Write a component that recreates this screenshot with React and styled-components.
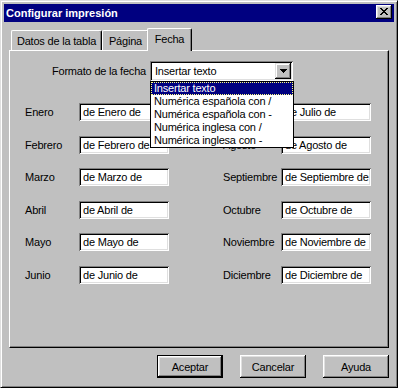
import React from "react";
import styled, { createGlobalStyle } from "styled-components";

const GlobalStyle = createGlobalStyle`
  html, body { margin: 0; padding: 0; background: #c0c0c0; }
  body {
    font-family: "Liberation Sans", Arial, sans-serif;
    font-size: 11px;
    letter-spacing: -0.2px;
    color: #000;
  }
  * { box-sizing: border-box; }
`;

const Window = styled.div`
  width: 398px;
  height: 388px;
  background: #c0c0c0;
  border: 1px solid;
  border-color: #dfdfdf #000 #000 #dfdfdf;
  box-shadow: inset 1px 1px #fff, inset -1px -1px #808080;
  padding: 3px;
  display: flex;
  flex-direction: column;
`;

const TitleBar = styled.div`
  height: 18px;
  background: #000080;
  color: #fff;
  display: flex;
  justify-content: space-between;
  align-items: flex-start;
  padding: 0 2px;
`;

const TitleText = styled.span`
  font-weight: bold;
  line-height: 18px;
  letter-spacing: 0;
`;

const CloseButton = styled.div`
  width: 16px;
  height: 14px;
  margin-top: 1px;
  background: #c0c0c0;
  box-shadow: inset -1px -1px #000, inset 1px 1px #fff, inset -2px -2px #808080,
    inset 2px 2px #dfdfdf;
  display: flex;
  align-items: center;
  justify-content: center;
  padding-right: 1px;
  padding-bottom: 1px;
`;

const Body = styled.div`
  padding: 6px 5px 0 5px;
  display: flex;
  flex-direction: column;
`;

const TabStrip = styled.div`
  position: relative;
  z-index: 2;
  height: 22px;
  display: flex;
  align-items: flex-end;
  padding-left: 2px;
`;

const Tab = styled.div`
  position: relative;
  z-index: ${(p) => (p.$active ? 1 : 0)};
  width: ${(p) => p.$width}px;
  height: ${(p) => (p.$active ? 23 : 20)}px;
  margin: ${(p) => (p.$active ? "0 -2px -1px -2px" : "0")};
  padding-bottom: ${(p) => (p.$active ? 3 : 0)}px;
  background: #c0c0c0;
  border-top: 1px solid #fff;
  border-left: 1px solid #fff;
  border-right: 1px solid #000;
  border-radius: 2px 2px 0 0;
  box-shadow: inset -1px 0 #808080;
  display: flex;
  align-items: center;
  justify-content: center;
  white-space: nowrap;
`;

const Panel = styled.div`
  position: relative;
  z-index: 1;
  height: 298px;
  border: 1px solid;
  border-color: #fff #000 #000 #fff;
  box-shadow: inset -1px -1px #808080;
  padding: 10px 0 0 15px;
`;

const FormatRow = styled.div`
  display: flex;
  align-items: center;
  padding-left: 21px;
`;

const FormatLabel = styled.span`
  width: 100px;
  text-align: right;
  margin-right: 4px;
`;

const SelectWrap = styled.div`
  position: relative;
  width: 143px;
  height: 20px;
`;

const sunken = `
  background: #fff;
  box-shadow: inset 1px 1px #808080, inset -1px -1px #fff, inset 2px 2px #000,
    inset -2px -2px #dfdfdf;
`;

const SelectField = styled.div`
  ${sunken}
  height: 100%;
  display: flex;
  align-items: center;
  padding: 2px 2px 2px 5px;
`;

const SelectValue = styled.span`
  flex: 1;
`;

const ArrowButton = styled.div`
  width: 16px;
  height: 16px;
  background: #c0c0c0;
  box-shadow: inset -1px -1px #000, inset 1px 1px #dfdfdf, inset -2px -2px #808080,
    inset 2px 2px #fff;
  display: flex;
  align-items: center;
  justify-content: center;
`;

const DropList = styled.div`
  position: absolute;
  top: 100%;
  left: 0;
  width: 144px;
  background: #fff;
  border: 1px solid #000;
  z-index: 5;
`;

const ListItem = styled.div`
  height: 13px;
  line-height: 13px;
  padding-left: 3px;
  white-space: nowrap;
  background: ${(p) => (p.$active ? "#000080" : "transparent")};
  color: ${(p) => (p.$active ? "#fff" : "#000")};
  outline: ${(p) => (p.$active ? "1px dotted #ffff80" : "none")};
  outline-offset: -1px;
`;

const MonthColumns = styled.div`
  display: flex;
  gap: 54px;
  margin-top: 22px;
`;

const MonthColumn = styled.div`
  display: grid;
  grid-template-columns: ${(p) => p.$labelWidth}px 90px;
  row-gap: 14.6px;
  align-items: center;
`;

const MonthLabel = styled.span`
  white-space: nowrap;
`;

const MonthInput = styled.div`
  ${sunken}
  height: 18px;
  padding-left: 4px;
  line-height: 18px;
  white-space: nowrap;
  overflow: hidden;
`;

const ButtonRow = styled.div`
  display: flex;
  justify-content: flex-end;
  gap: 17px;
  margin-top: 7px;
`;

const Button = styled.div`
  width: 66px;
  height: 23px;
  background: #c0c0c0;
  border: ${(p) => (p.$default ? "1px solid #000" : "none")};
  box-shadow: inset -1px -1px #000, inset 1px 1px #fff, inset -2px -2px #808080,
    inset 2px 2px #dfdfdf;
  display: flex;
  align-items: center;
  justify-content: center;
`;

const XIcon = () => (
  <svg width="8" height="7" viewBox="0 0 8 7" shapeRendering="crispEdges">
    <path
      fill="#000"
      d="M0 0h2v1H0zM6 0h2v1H6zM1 1h2v1H1zM5 1h2v1H5zM2 2h4v1H2zM3 3h2v1H3zM2 4h4v1H2zM1 5h2v1H1zM5 5h2v1H5zM0 6h2v1H0zM6 6h2v1H6z"
    />
  </svg>
);

const DownArrow = () => (
  <svg width="7" height="4" viewBox="0 0 7 4" shapeRendering="crispEdges">
    <path fill="#000" d="M0 0h7v1H0zM1 1h5v1H1zM2 2h3v1H2zM3 3h1v1H3z" />
  </svg>
);

const leftMonths = [
  ["Enero", "de Enero de"],
  ["Febrero", "de Febrero de"],
  ["Marzo", "de Marzo de"],
  ["Abril", "de Abril de"],
  ["Mayo", "de Mayo de"],
  ["Junio", "de Junio de"],
];

const rightMonths = [
  ["Julio", "de Julio de"],
  ["Agosto", "de Agosto de"],
  ["Septiembre", "de Septiembre de"],
  ["Octubre", "de Octubre de"],
  ["Noviembre", "de Noviembre de"],
  ["Diciembre", "de Diciembre de"],
];

const options = [
  "Insertar texto",
  "Numérica española con /",
  "Numérica española con -",
  "Numérica inglesa con /",
  "Numérica inglesa con -",
];

export default function App() {
  return (
    <>
      <GlobalStyle />
      <Window>
        <TitleBar>
          <TitleText>Configurar impresión</TitleText>
          <CloseButton>
            <XIcon />
          </CloseButton>
        </TitleBar>
        <Body>
          <TabStrip>
            <Tab $width={91}>Datos de la tabla</Tab>
            <Tab $width={47}>Página</Tab>
            <Tab $width={45} $active>
              Fecha
            </Tab>
          </TabStrip>
          <Panel>
            <FormatRow>
              <FormatLabel>Formato de la fecha</FormatLabel>
              <SelectWrap>
                <SelectField>
                  <SelectValue>Insertar texto</SelectValue>
                  <ArrowButton>
                    <DownArrow />
                  </ArrowButton>
                </SelectField>
                <DropList>
                  {options.map((o, i) => (
                    <ListItem key={o} $active={i === 0}>
                      {o}
                    </ListItem>
                  ))}
                </DropList>
              </SelectWrap>
            </FormatRow>
            <MonthColumns>
              <MonthColumn $labelWidth={54}>
                {leftMonths.map(([l, v]) => (
                  <React.Fragment key={l}>
                    <MonthLabel>{l}</MonthLabel>
                    <MonthInput>{v}</MonthInput>
                  </React.Fragment>
                ))}
              </MonthColumn>
              <MonthColumn $labelWidth={58}>
                {rightMonths.map(([l, v]) => (
                  <React.Fragment key={l}>
                    <MonthLabel>{l}</MonthLabel>
                    <MonthInput>{v}</MonthInput>
                  </React.Fragment>
                ))}
              </MonthColumn>
            </MonthColumns>
          </Panel>
          <ButtonRow>
            <Button $default>Aceptar</Button>
            <Button>Cancelar</Button>
            <Button>Ayuda</Button>
          </ButtonRow>
        </Body>
      </Window>
    </>
  );
}
